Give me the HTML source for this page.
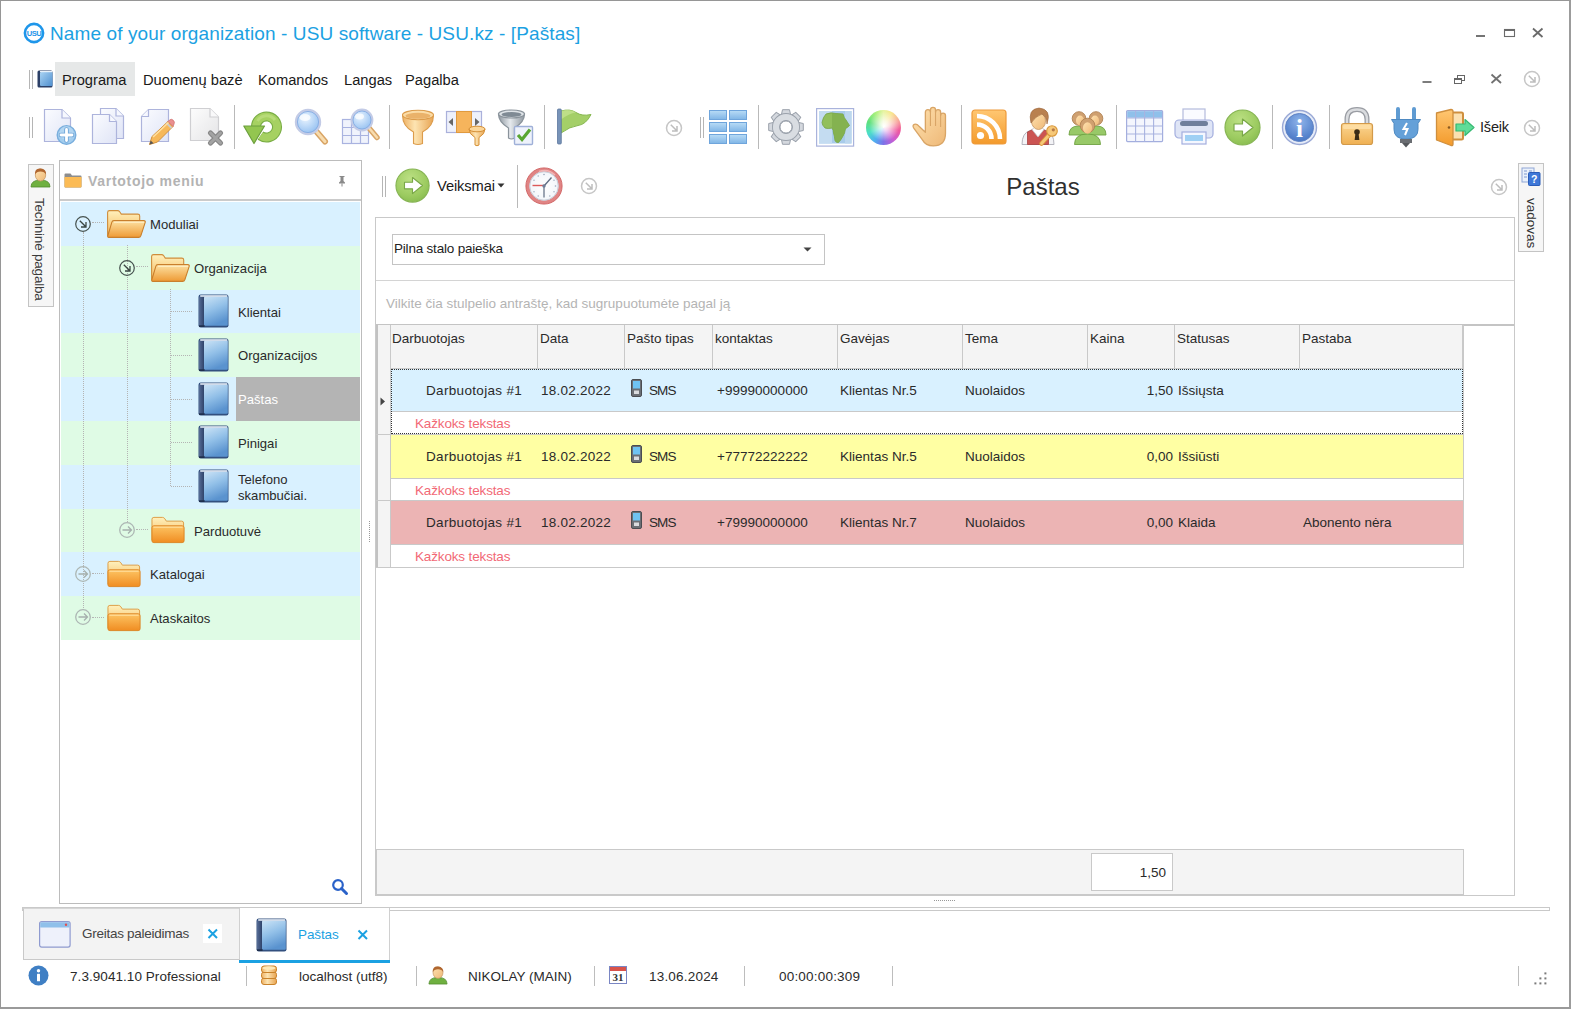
<!DOCTYPE html>
<html lang="lt">
<head>
<meta charset="utf-8">
<title>Name of your organization - USU software - USU.kz - [Paštas]</title>
<style>
*{box-sizing:border-box;margin:0;padding:0}
html,body{width:1571px;height:1009px;overflow:hidden;background:#fff}
body{font-family:"Liberation Sans",sans-serif;font-size:13.5px;color:#2a2a2a;position:relative}
.a{position:absolute}
.t{position:absolute;white-space:nowrap;line-height:16px;height:16px}
.win{position:absolute;left:0;top:0;width:1571px;height:1009px;border:1px solid #969696;border-right:2px solid #9c9c9c;border-bottom:2px solid #9a9a9a}
.title{left:50px;top:22px;font-size:19px;line-height:24px;height:24px;color:#1ba1e2;letter-spacing:.11px}
.menu{font-size:14.7px;line-height:18px;height:18px;top:71px;color:#1a1a1a}
.sep{position:absolute;width:1px;background:#b9b9b9}
.grip{position:absolute;width:4px;border-left:1px solid #b5b5b5;border-right:1px solid #b5b5b5}
.ic{position:absolute;overflow:visible}
.row{position:absolute;left:61px;width:299px;height:43.8px}
.rb{background:#d9f1ff}
.rg{background:#dffbe5}
.tl{position:absolute;font-size:13.1px;line-height:15px;color:#2a2a2a;white-space:nowrap}
.hd{position:absolute;top:325px;height:44px;background:#f4f4f4;border-right:1px solid #c9c9c9;border-bottom:1px solid #c9c9c9;font-size:13.5px;padding:6px 0 0 2px;white-space:nowrap}
.c{position:absolute;white-space:nowrap;font-size:13.5px;line-height:16px}
.pv{position:absolute;left:415px;letter-spacing:-.15px;color:#f26976;font-size:13.5px;line-height:16px;white-space:nowrap}
.st{position:absolute;top:969px;font-size:13.5px;line-height:16px;white-space:nowrap;color:#2a2a2a}
.ssep{position:absolute;top:966px;height:20px;width:1px;background:#bdbdbd}
</style>
</head>
<body>
<div class="win"></div>

<!-- TITLE BAR -->
<svg class="ic" style="left:23px;top:22px" width="22" height="22" viewBox="0 0 22 22"><circle cx="11" cy="11" r="9.100" fill="#fff" stroke="#1e96ea" stroke-width="2.600"/><text x="11" y="13.700" font-family="Liberation Sans, sans-serif" font-size="7.600" font-weight="700" fill="#1e96ea" text-anchor="middle" letter-spacing="-0.500">USU</text></svg>
<div class="t title">Name of your organization - USU software - USU.kz - [Paštas]</div>
<!-- window buttons -->
<svg class="ic" style="left:1470px;top:24px" width="80" height="20" viewBox="0 0 80 20"><rect x="6" y="11" width="9" height="2" fill="#747474"/><rect x="34.500" y="5.500" width="10" height="7" fill="none" stroke="#6a6a6a" stroke-width="1.100"/><rect x="34" y="5" width="11" height="2" fill="#6a6a6a"/><path d="M63 4.500l9.500 8.500M72.500 4.500l-9.500 8.500" stroke="#6a6a6a" stroke-width="1.800" fill="none"/></svg>

<!-- MENU BAR -->
<div class="grip" style="left:29px;top:70px;height:19px"></div>
<svg class="ic" style="left:37px;top:70px" width="16" height="18" viewBox="0 0 16 18"><defs><linearGradient id="bk" x1="0" y1="0" x2="1" y2="1"><stop offset="0" stop-color="#a9d3f3"/><stop offset="1" stop-color="#4f8fcf"/></linearGradient></defs><rect x=".5" y=".5" width="15" height="17" rx="1.5" fill="#2b3f66"/><rect x="3" y="2" width="12.500" height="14" rx="1" fill="url(#bk)"/><rect x="3" y="1" width="12.5" height="1.200" fill="#e8f1fa"/></svg>
<div class="a" style="left:55px;top:62px;width:80px;height:34px;background:#e6e8e8"></div>
<div class="t menu" style="left:62px">Programa</div>
<div class="t menu" style="left:143px">Duomenų bazė</div>
<div class="t menu" style="left:258px">Komandos</div>
<div class="t menu" style="left:344px">Langas</div>
<div class="t menu" style="left:405px">Pagalba</div>
<!-- mdi buttons -->
<svg class="ic" style="left:1415px;top:68px" width="130" height="24" viewBox="0 0 130 24"><rect x="7.500" y="13" width="9" height="2" fill="#7c7c7c"/><rect x="42.500" y="7.500" width="7" height="5" fill="#fff" stroke="#666"/><rect x="39.500" y="10.500" width="7" height="5" fill="#fff" stroke="#666"/><rect x="39" y="10" width="8" height="2" fill="#666"/><path d="M76.500 6.500l9.500 8.500M86 6.500l-9.500 8.500" stroke="#707070" stroke-width="1.800"/><g id="exg"><circle cx="117" cy="11" r="7.500" fill="#fff" stroke="#c6c6c6" stroke-width="1.500"/><path d="M113.800 7.800l5.500 5.500M120 9v5h-5" stroke="#bdbdbd" stroke-width="1.500" fill="none"/></g></svg>

<!-- TOOLBAR 1 -->
<svg width="0" height="0" style="position:absolute"><defs>
<linearGradient id="pg" x1="0" y1="0" x2="1" y2="1"><stop offset="0" stop-color="#fbfcff"/><stop offset="1" stop-color="#dfe4f6"/></linearGradient>
<linearGradient id="pgg" x1="0" y1="0" x2="1" y2="1"><stop offset="0" stop-color="#fdfdfd"/><stop offset="1" stop-color="#e4e4e6"/></linearGradient>
<radialGradient id="gg" cx=".42" cy=".3" r=".85"><stop offset="0" stop-color="#bce084"/><stop offset=".6" stop-color="#9ccb60"/><stop offset="1" stop-color="#7fb548"/></radialGradient>
<radialGradient id="lens" cx=".4" cy=".35" r=".7"><stop offset="0" stop-color="#e9f4ff"/><stop offset="1" stop-color="#8fbdf0"/></radialGradient>
<linearGradient id="gold" x1="0" y1="0" x2="1" y2="0"><stop offset="0" stop-color="#eeb062"/><stop offset=".4" stop-color="#fde4b2"/><stop offset="1" stop-color="#e8a452"/></linearGradient>
<linearGradient id="silv" x1="0" y1="0" x2="1" y2="0"><stop offset="0" stop-color="#8e979f"/><stop offset=".45" stop-color="#e6eaee"/><stop offset="1" stop-color="#8e979f"/></linearGradient>
<linearGradient id="blu" x1="0" y1="0" x2="0" y2="1"><stop offset="0" stop-color="#b9dcf6"/><stop offset="1" stop-color="#7fb5e6"/></linearGradient>
<linearGradient id="org" x1="0" y1="0" x2="0" y2="1"><stop offset="0" stop-color="#ffc772"/><stop offset="1" stop-color="#f39a2b"/></linearGradient>
<linearGradient id="fold" x1="0" y1="0" x2="0" y2="1"><stop offset="0" stop-color="#fff0bc"/><stop offset="1" stop-color="#f5b85a"/></linearGradient>
<linearGradient id="fold2" x1="0" y1="0" x2="0" y2="1"><stop offset="0" stop-color="#fde2a4"/><stop offset="1" stop-color="#ee9a34"/></linearGradient>
<linearGradient id="book" x1="0" y1="0" x2=".35" y2="1"><stop offset="0" stop-color="#cbe3f6"/><stop offset=".5" stop-color="#92c0e8"/><stop offset="1" stop-color="#5a93cf"/></linearGradient><linearGradient id="spine" x1="0" y1="0" x2="1" y2="0"><stop offset="0" stop-color="#566c96"/><stop offset="1" stop-color="#2b3f66"/></linearGradient>
<radialGradient id="info" cx=".5" cy=".3" r=".8"><stop offset="0" stop-color="#8fb4ea"/><stop offset="1" stop-color="#3f6fc0"/></radialGradient>
<linearGradient id="fold3" x1="0" y1="0" x2="0" y2="1"><stop offset="0" stop-color="#fdc463"/><stop offset="1" stop-color="#f08d22"/></linearGradient><linearGradient id="lockg" x1="0" y1="0" x2="0" y2="1"><stop offset="0" stop-color="#fbd693"/><stop offset="1" stop-color="#efb052"/></linearGradient><linearGradient id="skin" x1="0" y1="0" x2="1" y2="1"><stop offset="0" stop-color="#ffe2b0"/><stop offset="1" stop-color="#eeb877"/></linearGradient>
</defs></svg>
<div class="grip" style="left:29px;top:117px;height:21px"></div>
<!-- new -->
<svg class="ic" style="left:43px;top:108px" width="36" height="38" viewBox="0 0 36 38"><path d="M1.500 1.500H19L27.500 10V33.500H1.500Z" fill="url(#pg)" stroke="#adb4dc" stroke-width="1.200"/><path d="M19 1.500V10H27.500" fill="#f6f8fe" stroke="#adb4dc" stroke-width="1.200"/><circle cx="23.500" cy="27" r="9.300" fill="#a3cdee" stroke="#79aedd" stroke-width="1.400"/><circle cx="23.500" cy="25" r="7" fill="#b9daf3" opacity=".7"/><path d="M23.500 21.500v11M18 27h11" stroke="#6fa5d8" stroke-width="4.600" stroke-linecap="round"/><path d="M23.500 21.500v11M18 27h11" stroke="#fff" stroke-width="2.800" stroke-linecap="round"/></svg>
<!-- copy -->
<svg class="ic" style="left:91px;top:107px" width="36" height="38" viewBox="0 0 36 38"><path d="M9.500 1.500H25L32.500 9V31.500H9.500Z" fill="url(#pg)" stroke="#adb4dc" stroke-width="1.200"/><path d="M25 1.500V9H32.500" fill="#f6f8fe" stroke="#adb4dc" stroke-width="1.200"/><path d="M1.500 7.500H18.500L25.500 14.500V36.500H1.500Z" fill="url(#pg)" stroke="#adb4dc" stroke-width="1.200"/><path d="M18.500 7.500V14.500H25.500" fill="#f6f8fe" stroke="#adb4dc" stroke-width="1.200"/></svg>
<!-- edit -->
<svg class="ic" style="left:140px;top:108px" width="38" height="40" viewBox="0 0 38 40"><path d="M8.500 1.500H28.500V33.500H1.500V8.500Z" fill="url(#pg)" stroke="#adb4dc" stroke-width="1.200"/><path d="M8.500 1.500V8.500H1.500" fill="#f6f8fe" stroke="#adb4dc" stroke-width="1.200"/><path d="M9.500 36.500l2.500-8L28 13.500l5 5L17.500 34Z" fill="#f6b85a" stroke="#d3913c" stroke-width="1"/><path d="M28 13.500l1.500-1.500q2-1.500 3.800.3t.7 3.700L33 18.500Z" fill="#ea8f8f" stroke="#cf7070" stroke-width=".8"/><path d="M26.500 15.200l5 5" stroke="#c8ccd4" stroke-width="1.800"/><path d="M9.500 36.500l1.200-4 2.800 2.800Z" fill="#555"/><path d="M13 29L28.500 14.500" stroke="#ffe0a0" stroke-width="1.600"/></svg>
<!-- delete -->
<svg class="ic" style="left:189px;top:107px" width="38" height="40" viewBox="0 0 38 40"><path d="M1.500 1.500H21L29.500 10V33.500H1.500Z" fill="url(#pgg)" stroke="#cfcfd2" stroke-width="1.200"/><path d="M21 1.500V10H29.500" fill="#f9f9fa" stroke="#cfcfd2" stroke-width="1.200"/><path d="M21.500 26l10 10M31.500 26l-10 10" stroke="#858585" stroke-width="5.200" stroke-linecap="round"/><path d="M21.500 26l10 10M31.500 26l-10 10" stroke="#a3a3a3" stroke-width="3" stroke-linecap="round"/></svg>
<div class="sep" style="left:234px;top:105px;height:44px"></div>
<!-- refresh -->
<svg class="ic" style="left:243px;top:109px" width="40" height="38" viewBox="0 0 40 38"><path d="M13 18A10.500 10.500 0 1 1 17.500 26.600" fill="none" stroke="#79ad45" stroke-width="10"/><path d="M13 18A10.500 10.500 0 1 1 17.500 26.600" fill="none" stroke="#a6d162" stroke-width="7.800"/><path d="M14.500 12A10.500 10.500 0 0 1 32 11" fill="none" stroke="#bfe082" stroke-width="3" opacity=".7"/><path d="M.8 17H21.500L11 34.500Z" fill="#93c650" stroke="#6c9f3e" stroke-width="1.200" stroke-linejoin="round"/></svg>
<!-- search -->
<svg class="ic" style="left:294px;top:108px" width="38" height="38" viewBox="0 0 38 38"><path d="M22 23l9 10.500" stroke="#d9a566" stroke-width="6" stroke-linecap="round"/><path d="M22 23l9 10.500" stroke="#f8dcae" stroke-width="3" stroke-linecap="round"/><circle cx="14" cy="14" r="12" fill="url(#lens)" stroke="#c3cbe6" stroke-width="2.400"/><circle cx="14" cy="14" r="10.600" fill="none" stroke="#86abe2" stroke-width=".9"/><ellipse cx="11" cy="9.500" rx="5.500" ry="3.600" fill="#fff" opacity=".75"/></svg>
<!-- search table -->
<svg class="ic" style="left:341px;top:108px" width="40" height="38" viewBox="0 0 40 38"><rect x="1.500" y="11.500" width="26" height="24" fill="#f0f3fc" stroke="#a9b3e0" stroke-width="1.200"/><path d="M1.500 19.500h26M1.500 27.500h26M10.500 11.500v24M19.500 11.500v24" stroke="#a9b3e0" stroke-width="1.200"/><path d="M28 20l8 9.500" stroke="#d9a566" stroke-width="5.500" stroke-linecap="round"/><path d="M28 20l8 9.500" stroke="#f8dcae" stroke-width="2.600" stroke-linecap="round"/><circle cx="21" cy="12" r="10.300" fill="url(#lens)" stroke="#c3cbe6" stroke-width="2.200"/><circle cx="21" cy="12" r="9" fill="none" stroke="#86abe2" stroke-width=".9"/><ellipse cx="18.500" cy="8.500" rx="4.500" ry="3" fill="#fff" opacity=".75"/></svg>
<div class="sep" style="left:389px;top:105px;height:44px"></div>
<!-- funnel gold -->
<svg class="ic" style="left:401px;top:109px" width="34" height="38" viewBox="0 0 34 38"><path d="M1.500 6Q1.500 17.500 12.500 23V34.500q4.500 2 9 0V23Q32.500 17.500 32.500 6Z" fill="url(#gold)" stroke="#dc9c4c" stroke-width="1.100"/><ellipse cx="17" cy="6" rx="15.500" ry="4.800" fill="#fbdca6" stroke="#dc9c4c" stroke-width="1.100"/><ellipse cx="17" cy="6.800" rx="12.500" ry="3" fill="#eab26a"/></svg>
<!-- filter columns -->
<svg class="ic" style="left:445px;top:110px" width="44" height="38" viewBox="0 0 44 38"><rect x="1.500" y="1.500" width="35" height="21" fill="#eef1fb" stroke="#aab1db" stroke-width="1.200"/><rect x="11.500" y="1.500" width="15" height="21" fill="#f6b45c" stroke="#e09a3e" stroke-width="1"/><path d="M8 8v8l-4.500-4ZM30 8v8l4.500-4Z" fill="#666"/><path d="M24 19q0 5 6 8.500V35q2 1.500 4 0V27.500Q40 24 40 19Z" fill="url(#gold)" stroke="#d58f35" stroke-width="1"/><ellipse cx="32" cy="19" rx="8" ry="2.800" fill="#fbd69a" stroke="#d58f35" stroke-width="1"/></svg>
<!-- funnel check -->
<svg class="ic" style="left:497px;top:109px" width="40" height="38" viewBox="0 0 40 38"><path d="M1.500 5q0 8 10 14V29q3 2 6 0V19Q27.500 13 27.500 5Z" fill="url(#silv)" stroke="#8a939b" stroke-width="1.200"/><ellipse cx="14.500" cy="5" rx="13" ry="4" fill="#dfe4e8" stroke="#8a939b" stroke-width="1.200"/><ellipse cx="14.500" cy="5.500" rx="10" ry="2.500" fill="#7f8a94"/><rect x="17.500" y="17.500" width="18" height="18" rx="1" fill="#eef2fb" stroke="#9fb0d8" stroke-width="1.400"/><path d="M21 26l4 4.500 8-10" stroke="#58a632" stroke-width="3.200" fill="none"/></svg>
<div class="sep" style="left:544px;top:105px;height:44px"></div>
<!-- flag -->
<svg class="ic" style="left:555px;top:108px" width="40" height="38" viewBox="0 0 40 38"><path d="M6 3q9-2.500 15 1.500t15 2q-5 10-13 11t-17 7.500Z" fill="#a4cf68" stroke="#86b750" stroke-width="1"/><path d="M6 3q9-2.500 15 1.500-7 1-15 7Z" fill="#c4e290" opacity=".8"/><rect x="2.500" y="1" width="3.800" height="35" rx="1" fill="#7893b8" stroke="#5d779e" stroke-width=".8"/></svg>
<svg class="ic" style="left:665px;top:119px" width="18" height="18" viewBox="108 2 18 18"><use href="#exg"/></svg>
<div class="grip" style="left:700px;top:117px;height:21px"></div>
<!-- grid -->
<svg class="ic" style="left:709px;top:110px" width="38" height="34" viewBox="0 0 38 34"><g fill="url(#blu)" stroke="#6fa5dc" stroke-width="1"><rect x=".5" y=".5" width="17" height="9"/><rect x="20.500" y=".5" width="17" height="9"/><rect x=".5" y="12.500" width="17" height="9"/><rect x="20.500" y="12.500" width="17" height="9"/><rect x=".5" y="24.500" width="17" height="9"/><rect x="20.500" y="24.500" width="17" height="9"/></g></svg>
<div class="sep" style="left:758px;top:105px;height:44px"></div>
<!-- gear -->
<svg class="ic" style="left:768px;top:109px" width="36" height="36" viewBox="-18 -18 36 36"><g fill="#d4d8de" stroke="#9aa1ab" stroke-width="1"><path id="gt" d="M-3.500-17.300h7l1.200 5.500h-9.400Z"/><use href="#gt" transform="rotate(45)"/><use href="#gt" transform="rotate(90)"/><use href="#gt" transform="rotate(135)"/><use href="#gt" transform="rotate(180)"/><use href="#gt" transform="rotate(225)"/><use href="#gt" transform="rotate(270)"/><use href="#gt" transform="rotate(315)"/></g><circle r="10" fill="none" stroke="#9aa1ab" stroke-width="8"/><circle r="10" fill="none" stroke="#d9dde2" stroke-width="6.200"/><circle r="6" fill="#fff" stroke="#9aa1ab" stroke-width="1"/></svg>
<!-- map -->
<svg class="ic" style="left:816px;top:108px" width="39" height="39" viewBox="0 0 39 39"><rect x=".600" y=".600" width="37" height="37.500" fill="#fff" stroke="#a9b3dc" stroke-width="1.200"/><rect x="3" y="3" width="32.500" height="32.500" fill="#a8cbea"/><rect x="3" y="3" width="13" height="32.500" fill="#c4dcf1"/><rect x="29" y="3" width="6.500" height="32.500" fill="#bcd7ee"/><path d="M10 6Q15 4 20 5.500L27 6Q28 10 30 12L33.500 17.500Q31 20 29.500 20.500Q29 25 27 28Q25 32 22.500 34.500Q20 35 19 32.500Q18.500 28 17.500 25Q17.500 22 16 20Q12 21 9 20Q6 17 6 14.500Q7 9 10 6Z" fill="#92bf5c" stroke="#76a347" stroke-width=".8"/><path d="M16 5.200L27 6Q28 10 30 12L33.500 17.500Q31 20 29.500 20.500Q29 25 27 28Q25 32 22.500 34.500Q20 35 19 32.500Q18.500 28 17.500 25Q17.500 22 16 20Z" fill="#7fae4c" opacity=".75"/></svg>
<!-- color wheel -->
<div class="a" style="left:866px;top:110px;width:35px;height:35px;border-radius:50%;background:radial-gradient(circle at 52% 46%,#fff 0,rgba(255,255,255,.75) 18%,rgba(255,255,255,0) 58%),conic-gradient(from 0deg,#e6f4a0,#f8e68c 30deg,#f8a39c 68deg,#f0589c 100deg,#cc5cd2 140deg,#7c72e8 180deg,#4eb0f0 215deg,#4ce0c6 250deg,#5ee07c 290deg,#a8f07c 330deg,#e6f4a0)"></div>
<!-- hand -->
<svg class="ic" style="left:911px;top:106px" width="42" height="42" viewBox="0 0 38 40" preserveAspectRatio="none"><path d="M13 20V6q0-2.500 2.300-2.500T17.600 6V3.800q0-2.500 2.300-2.500t2.300 2.500V6q0-2.500 2.300-2.500T26.800 6V9q0-2.300 2.200-2.300T31.200 9V26q0 12-11 12-7 0-10-6L2.500 21q-1.500-2.500.5-3.500t4 1.500l6 6Z" fill="url(#skin)" stroke="#d9a566" stroke-width="1.200" stroke-linejoin="round"/><path d="M17.600 6V19M22.200 6V19M26.800 9V20" stroke="#d9a566" stroke-width="1"/></svg>
<div class="sep" style="left:961px;top:105px;height:44px"></div>
<!-- rss -->
<svg class="ic" style="left:971px;top:109px" width="36" height="36" viewBox="0 0 36 36"><rect x="1" y="1" width="34" height="34" rx="3" fill="url(#org)" stroke="#ee9a3a" stroke-width="1.200"/><circle cx="9.500" cy="26.500" r="3.600" fill="#fff"/><path d="M6 15.500A14.500 14.500 0 0 1 20.500 30M6 7A23 23 0 0 1 29 30" fill="none" stroke="#fff" stroke-width="4.600"/></svg>
<!-- user key -->
<svg class="ic" style="left:1020px;top:106px" width="40" height="40" viewBox="0 0 40 40"><path d="M2 38.500Q2 27 10 24.500L18 22 26 24.500Q34 27 34 38.500Z" fill="#f3f3f6" stroke="#b4b4bc" stroke-width="1"/><path d="M7.500 38.500V26L13 23.500 18 31 23 23.500 28.500 26V38.500Z" fill="#cb5452" stroke="#a94040" stroke-width=".8"/><path d="M12 23.500L18 31 24 23.500 21 21H15Z" fill="#fff" stroke="#c4c4c8" stroke-width=".8"/><ellipse cx="18.500" cy="15" rx="7" ry="8.500" fill="url(#skin)" stroke="#c99a66" stroke-width=".9"/><path d="M11 17Q7.500 3 19 2Q32 3 27 18Q26.500 10.500 22 8Q15.500 10 11 17Z" fill="#b9804f" stroke="#9a643a" stroke-width=".6"/><path d="M29.500 28.500L21.500 37.500" stroke="#d9973a" stroke-width="4.600" stroke-linecap="round"/><path d="M29.500 28.500L21.500 37.500" stroke="#f6c878" stroke-width="2.800" stroke-linecap="round"/><circle cx="32" cy="25" r="5.300" fill="#f6c878" stroke="#d9973a" stroke-width="1.100"/><circle cx="33.300" cy="23.800" r="1.600" fill="#b67a48"/></svg>
<!-- users -->
<svg class="ic" style="left:1068px;top:107px" width="40" height="40" viewBox="0 0 40 40"><g stroke-width=".9"><path d="M1 28Q1 19 10.500 19T20 28Z" fill="#98c968" stroke="#6fa243"/><path d="M19 28Q19 19 28.500 19T38 28Z" fill="#98c968" stroke="#6fa243"/><circle cx="11" cy="11.500" r="6.800" fill="#cfa070" stroke="#b08050"/><ellipse cx="12" cy="13.500" rx="4" ry="5" fill="url(#skin)"/><circle cx="28" cy="11.500" r="6.800" fill="#cfa070" stroke="#b08050"/><ellipse cx="27" cy="13.500" rx="4" ry="5" fill="url(#skin)"/><path d="M6.500 37.500Q6.500 27 19.500 27T32.500 37.500Z" fill="#98c968" stroke="#6fa243"/><circle cx="19.500" cy="18.500" r="7.300" fill="#cfa070" stroke="#b08050"/><ellipse cx="19.500" cy="21" rx="4.600" ry="5.800" fill="url(#skin)"/></g></svg>
<div class="sep" style="left:1116px;top:105px;height:44px"></div>
<!-- table -->
<svg class="ic" style="left:1126px;top:110px" width="38" height="34" viewBox="0 0 38 34"><rect x=".600" y=".600" width="36" height="31" rx="1" fill="#f4f6fd" stroke="#a3aede" stroke-width="1.200"/><rect x="1.200" y="1.200" width="34.800" height="6.500" fill="#8fc0ea"/><path d="M.600 8h36M.600 16h36M.600 24h36M9.600 1v30.500M18.600 1v30.500M27.600 1v30.500" stroke="#a9b3e0" stroke-width="1.100"/></svg>
<!-- printer -->
<svg class="ic" style="left:1174px;top:108px" width="40" height="38" viewBox="0 0 40 38"><rect x="9" y="1" width="22" height="13" fill="#fafbff" stroke="#b4bbdc" stroke-width="1.200"/><rect x="1" y="12" width="38" height="18" rx="4" fill="#dfe5f6" stroke="#a3aede" stroke-width="1.200"/><rect x="6" y="13" width="28" height="5" rx="2.500" fill="#6f7f9c"/><rect x="8" y="24" width="24" height="12" fill="#f4f7ff" stroke="#a3aede" stroke-width="1.200"/><rect x="11" y="27" width="18" height="6" fill="#9fd0f4"/></svg>
<!-- go -->
<svg class="ic" style="left:1224px;top:109px" width="38" height="38" viewBox="0 0 38 38"><circle cx="18.500" cy="18.500" r="17.500" fill="url(#gg)" stroke="#86b453" stroke-width="1.200"/><path d="M10 15h8.500V10l10.500 8.500L18.500 27V22H10Z" fill="#fff" stroke="#7aa848" stroke-width="1.200" stroke-linejoin="round"/></svg>
<div class="sep" style="left:1272px;top:105px;height:44px"></div>
<!-- info -->
<svg class="ic" style="left:1281px;top:109px" width="38" height="38" viewBox="0 0 38 38"><circle cx="18.500" cy="18.500" r="17" fill="#e6ecf8" stroke="#9aa9d6" stroke-width="1.400"/><circle cx="18.500" cy="18.500" r="14" fill="url(#info)" stroke="#5f82c4" stroke-width="1"/><text x="18.500" y="27.500" font-family="Liberation Serif, serif" font-size="25" font-weight="700" fill="#fff" text-anchor="middle">i</text></svg>
<div class="sep" style="left:1329px;top:105px;height:44px"></div>
<!-- lock -->
<svg class="ic" style="left:1340px;top:107px" width="34" height="40" viewBox="0 0 34 40"><path d="M7 19V12.500Q7 2.500 17 2.500T27 12.500V19" fill="none" stroke="#9a9da3" stroke-width="5"/><path d="M7 19V12.500Q7 2.500 17 2.500T27 12.500V19" fill="none" stroke="#dadcdf" stroke-width="2.400"/><rect x="1.500" y="16.500" width="31" height="21" rx="2.500" fill="url(#lockg)" stroke="#d39a4a" stroke-width="1.200"/><rect x="3" y="18" width="28" height="4" rx="1.500" fill="#ffe0a8" opacity=".8"/><circle cx="17" cy="25" r="2.800" fill="#3a2b16"/><path d="M15.600 25h2.800l1 8h-4.800Z" fill="#3a2b16"/></svg>
<!-- plug -->
<svg class="ic" style="left:1390px;top:107px" width="32" height="42" viewBox="0 0 32 42"><path d="M8 2v12M24 2v12" stroke="#5f9bd2" stroke-width="4" stroke-linecap="round"/><path d="M1.500 12.500h29l-2.500 4v6q0 9.500-12 9.500t-12-9.500v-6Z" fill="#64a0d8" stroke="#4f8ac2" stroke-width="1"/><path d="M17 16l-3.500 6h4l-2.500 6" stroke="#fff" stroke-width="2" fill="none"/><rect x="10" y="32" width="12" height="4" fill="#6a6d72"/><path d="M12 36h8l-4 4.500Z" fill="#55585c"/></svg>
<!-- door -->
<svg class="ic" style="left:1435px;top:108px" width="42" height="40" viewBox="0 0 42 40"><rect x="14" y="4.500" width="14" height="27" rx="1.500" fill="#fbe0b0" stroke="#cf8f3e" stroke-width="2"/><path d="M1.500 5L16 1.500q2 0 2 2V36q0 2-2 1.500L1.500 32Z" fill="url(#org)" stroke="#cf8f3e" stroke-width="1.300" stroke-linejoin="round"/><circle cx="14" cy="19.500" r="1.300" fill="#8a5a20"/><path d="M21 16h9V11.500L39 19.500 30 27.500V23h-9Z" fill="#5fdc98" stroke="#35b872" stroke-width="1.200" stroke-linejoin="round"/></svg>
<div class="t" style="left:1480px;top:119px;font-size:14.500px;letter-spacing:-.2px;color:#222">Išeik</div>
<svg class="ic" style="left:1523px;top:119px" width="18" height="18" viewBox="108 2 18 18"><use href="#exg"/></svg>

<!--LP0-->
<!-- LEFT SIDE TAB -->
<div class="a" style="left:28px;top:164px;width:26px;height:143px;border:1px solid #c4c4c4;background:#f6f6f6"></div>
<svg class="ic" style="left:30px;top:167px" width="21" height="21" viewBox="0 0 21 21"><path d="M1 20q0-7 9.500-7T20 20Z" fill="#6fb040" stroke="#4f8a2c" stroke-width=".8"/><ellipse cx="10.500" cy="8" rx="5.200" ry="6" fill="url(#skin)" stroke="#c99a66" stroke-width=".8"/><path d="M5 7.500Q4.500 1 10.500 1.500T16 7.500Q14.500 4.500 10.500 4.500T5 7.500Z" fill="#b0662f"/></svg>
<div class="t" style="left:-13.500px;top:242px;width:104px;text-align:left;transform:rotate(90deg);transform-origin:center;font-size:13.5px;letter-spacing:-.2px;color:#3a3a3a">Techninė pagalba</div>
<!-- LEFT PANEL -->
<div class="a" style="left:59px;top:160px;width:303px;height:744px;border:1px solid #bcbcbc;background:#fff"></div>
<div class="a" style="left:60px;top:199px;width:301px;height:2px;background:#cbcbcb"></div>
<svg class="ic" style="left:64px;top:173px" width="18" height="15" viewBox="0 0 18 15"><path d="M.5 1.500q0-1 1-1h5l1.500 2h8.500q1 0 1 1V13.500q0 1-1 1H1.500q-1 0-1-1Z" fill="#8d8d8d"/><path d="M.5 4h17V13.500q0 1-1 1H1.500q-1 0-1-1Z" fill="#fbbb55"/></svg>
<div class="t" style="left:88px;top:173px;font-weight:700;font-size:14px;color:#b3b3b3;letter-spacing:.7px">Vartotojo meniu</div>
<svg class="ic" style="left:336px;top:175px" width="12" height="12" viewBox="0 0 12 12"><path d="M3.500 1h5v1h-1v4l1.500 1.500v1h-6v-1L4.500 6V2h-1Z" fill="#8a8a8a"/><path d="M6 8.500v3" stroke="#8a8a8a" stroke-width="1"/></svg>
<div class="row rb" style="top:202.0px"></div>
<div class="row rg" style="top:245.8px"></div>
<div class="row rb" style="top:289.6px"></div>
<div class="row rg" style="top:333.4px"></div>
<div class="row rb" style="top:377.2px"></div>
<div class="row rg" style="top:421.0px"></div>
<div class="row rb" style="top:464.8px"></div>
<div class="row rg" style="top:508.6px"></div>
<div class="row rb" style="top:552.4px"></div>
<div class="row rg" style="top:596.2px"></div>
<div class="a" style="left:83px;top:232.4px;height:377.2px;width:0;border-left:1px dotted #b4b4b4"></div>
<div class="a" style="left:127px;top:245.4px;height:276.6px;width:0;border-left:1px dotted #b4b4b4"></div>
<div class="a" style="left:170px;top:289.2px;height:197.0px;width:0;border-left:1px dotted #b4b4b4"></div>
<div class="a" style="left:171px;top:311.0px;width:21px;height:0;border-top:1px dotted #b4b4b4"></div>
<div class="a" style="left:171px;top:354.8px;width:21px;height:0;border-top:1px dotted #b4b4b4"></div>
<div class="a" style="left:171px;top:398.6px;width:21px;height:0;border-top:1px dotted #b4b4b4"></div>
<div class="a" style="left:171px;top:442.4px;width:21px;height:0;border-top:1px dotted #b4b4b4"></div>
<div class="a" style="left:171px;top:486.2px;width:21px;height:0;border-top:1px dotted #b4b4b4"></div>
<div class="a" style="left:92px;top:222.4px;width:12px;height:0;border-top:1px dotted #b4b4b4"></div>
<div class="a" style="left:92px;top:572.8px;width:12px;height:0;border-top:1px dotted #b4b4b4"></div>
<div class="a" style="left:92px;top:616.6px;width:12px;height:0;border-top:1px dotted #b4b4b4"></div>
<div class="a" style="left:136px;top:266.2px;width:12px;height:0;border-top:1px dotted #b4b4b4"></div>
<div class="a" style="left:136px;top:529.0px;width:12px;height:0;border-top:1px dotted #b4b4b4"></div>
<svg class="ic" style="left:74px;top:215.4px" width="18" height="18" viewBox="0 0 18 18"><circle cx="9" cy="9" r="7.300" fill="none" stroke="#46524f" stroke-width="1.200"/><path d="M5.800 5.800l5.500 5.500M12 7v5H7" stroke="#3a4643" stroke-width="1.300" fill="none"/></svg>
<svg class="ic" style="left:107px;top:209.9px" width="39" height="28" viewBox="0 0 39 28"><path d="M.6 26V2.500q0-1.900 1.900-1.900h8q1.400 0 2.200 1.200l1.600 2.300h16.500q1.900 0 1.900 1.900V12H6Z" fill="url(#fold)" stroke="#cf8d3c" stroke-width="1.100"/><path d="M6.800 10.600h30q1.900 0 1.400 1.800l-4.300 13.200q-.6 1.800-2.400 1.800H1.900q-1.600 0-1.100-1.600l4-13.400q.5-1.800 2-1.800Z" fill="url(#fold2)" stroke="#c97f2c" stroke-width="1.100"/><path d="M7 12.200h30" stroke="#fff0c8" stroke-width="1.200"/></svg>
<div class="tl" style="left:150px;top:216.9px">Moduliai</div>
<svg class="ic" style="left:118px;top:259.2px" width="18" height="18" viewBox="0 0 18 18"><circle cx="9" cy="9" r="7.300" fill="none" stroke="#46524f" stroke-width="1.200"/><path d="M5.800 5.800l5.500 5.500M12 7v5H7" stroke="#3a4643" stroke-width="1.300" fill="none"/></svg>
<svg class="ic" style="left:151px;top:253.7px" width="39" height="28" viewBox="0 0 39 28"><path d="M.6 26V2.500q0-1.900 1.900-1.900h8q1.400 0 2.200 1.200l1.600 2.300h16.500q1.900 0 1.900 1.900V12H6Z" fill="url(#fold)" stroke="#cf8d3c" stroke-width="1.100"/><path d="M6.800 10.600h30q1.900 0 1.400 1.800l-4.300 13.200q-.6 1.800-2.400 1.800H1.900q-1.600 0-1.100-1.600l4-13.400q.5-1.800 2-1.800Z" fill="url(#fold2)" stroke="#c97f2c" stroke-width="1.100"/><path d="M7 12.200h30" stroke="#fff0c8" stroke-width="1.200"/></svg>
<div class="tl" style="left:194px;top:260.7px">Organizacija</div>
<svg class="ic" style="left:197.7px;top:294.0px" width="31" height="34" viewBox="0 0 31 34"><rect x=".5" y=".5" width="30" height="33" rx="2.200" fill="#33507f"/><rect x="1" y="2.500" width="5.500" height="30" rx="1" fill="url(#spine)"/><rect x="6" y="2.600" width="23.800" height="29.200" rx="1" fill="url(#book)"/><rect x="2" y="1.200" width="27.500" height="1.500" rx=".7" fill="#eef4fb"/><rect x="1" y="31.300" width="5.500" height="1.700" fill="#1f2f4e"/></svg>
<div class="tl" style="left:238px;top:304.5px">Klientai</div>
<svg class="ic" style="left:197.7px;top:337.8px" width="31" height="34" viewBox="0 0 31 34"><rect x=".5" y=".5" width="30" height="33" rx="2.200" fill="#33507f"/><rect x="1" y="2.500" width="5.500" height="30" rx="1" fill="url(#spine)"/><rect x="6" y="2.600" width="23.800" height="29.200" rx="1" fill="url(#book)"/><rect x="2" y="1.200" width="27.500" height="1.500" rx=".7" fill="#eef4fb"/><rect x="1" y="31.300" width="5.500" height="1.700" fill="#1f2f4e"/></svg>
<div class="tl" style="left:238px;top:348.3px">Organizacijos</div>
<svg class="ic" style="left:197.7px;top:381.6px" width="31" height="34" viewBox="0 0 31 34"><rect x=".5" y=".5" width="30" height="33" rx="2.200" fill="#33507f"/><rect x="1" y="2.500" width="5.500" height="30" rx="1" fill="url(#spine)"/><rect x="6" y="2.600" width="23.800" height="29.200" rx="1" fill="url(#book)"/><rect x="2" y="1.200" width="27.500" height="1.500" rx=".7" fill="#eef4fb"/><rect x="1" y="31.300" width="5.500" height="1.700" fill="#1f2f4e"/></svg>
<div class="a" style="left:236px;top:377.2px;width:124px;height:43.8px;background:#b4b4b4"></div>
<div class="tl" style="left:238px;top:392.1px;color:#fff">Paštas</div>
<svg class="ic" style="left:197.7px;top:425.4px" width="31" height="34" viewBox="0 0 31 34"><rect x=".5" y=".5" width="30" height="33" rx="2.200" fill="#33507f"/><rect x="1" y="2.500" width="5.500" height="30" rx="1" fill="url(#spine)"/><rect x="6" y="2.600" width="23.800" height="29.200" rx="1" fill="url(#book)"/><rect x="2" y="1.200" width="27.500" height="1.500" rx=".7" fill="#eef4fb"/><rect x="1" y="31.300" width="5.500" height="1.700" fill="#1f2f4e"/></svg>
<div class="tl" style="left:238px;top:435.9px">Pinigai</div>
<svg class="ic" style="left:197.7px;top:469.2px" width="31" height="34" viewBox="0 0 31 34"><rect x=".5" y=".5" width="30" height="33" rx="2.200" fill="#33507f"/><rect x="1" y="2.500" width="5.500" height="30" rx="1" fill="url(#spine)"/><rect x="6" y="2.600" width="23.800" height="29.200" rx="1" fill="url(#book)"/><rect x="2" y="1.200" width="27.500" height="1.500" rx=".7" fill="#eef4fb"/><rect x="1" y="31.300" width="5.500" height="1.700" fill="#1f2f4e"/></svg>
<div class="tl" style="left:238px;top:472.2px;line-height:15.500px">Telefono<br>skambučiai.</div>
<svg class="ic" style="left:118px;top:520.8px" width="18" height="18" viewBox="0 0 18 18"><circle cx="9" cy="9" r="7.300" fill="none" stroke="#adb7b4" stroke-width="1.300"/><path d="M4.500 9h8.500M10 5.500l3.500 3.500-3.500 3.500" stroke="#a6b0ad" stroke-width="1.300" fill="none"/></svg>
<svg class="ic" style="left:151px;top:516.0px" width="34.500" height="28" viewBox="0 0 36 30" preserveAspectRatio="none"><path d="M1 26V3.500q0-2 2-2h9q1.500 0 2.500 1.500l1.500 2.500h16q2 0 2 2V26Z" fill="url(#fold)" stroke="#dd9a42" stroke-width="1"/><rect x="1" y="10.500" width="33.500" height="18" rx="2" fill="url(#fold3)" stroke="#dc8422" stroke-width="1"/><path d="M2.500 12h30.500" stroke="#ffe0a0" stroke-width="1.200"/></svg>
<div class="tl" style="left:194px;top:523.5px">Parduotuvė</div>
<svg class="ic" style="left:74px;top:564.6px" width="18" height="18" viewBox="0 0 18 18"><circle cx="9" cy="9" r="7.300" fill="none" stroke="#adb7b4" stroke-width="1.300"/><path d="M4.500 9h8.500M10 5.500l3.500 3.500-3.500 3.500" stroke="#a6b0ad" stroke-width="1.300" fill="none"/></svg>
<svg class="ic" style="left:107px;top:559.8px" width="34.500" height="28" viewBox="0 0 36 30" preserveAspectRatio="none"><path d="M1 26V3.500q0-2 2-2h9q1.500 0 2.500 1.500l1.500 2.500h16q2 0 2 2V26Z" fill="url(#fold)" stroke="#dd9a42" stroke-width="1"/><rect x="1" y="10.500" width="33.500" height="18" rx="2" fill="url(#fold3)" stroke="#dc8422" stroke-width="1"/><path d="M2.500 12h30.500" stroke="#ffe0a0" stroke-width="1.200"/></svg>
<div class="tl" style="left:150px;top:567.3px">Katalogai</div>
<svg class="ic" style="left:74px;top:608.4px" width="18" height="18" viewBox="0 0 18 18"><circle cx="9" cy="9" r="7.300" fill="none" stroke="#adb7b4" stroke-width="1.300"/><path d="M4.500 9h8.500M10 5.500l3.500 3.500-3.500 3.500" stroke="#a6b0ad" stroke-width="1.300" fill="none"/></svg>
<svg class="ic" style="left:107px;top:603.6px" width="34.500" height="28" viewBox="0 0 36 30" preserveAspectRatio="none"><path d="M1 26V3.500q0-2 2-2h9q1.500 0 2.500 1.500l1.500 2.500h16q2 0 2 2V26Z" fill="url(#fold)" stroke="#dd9a42" stroke-width="1"/><rect x="1" y="10.500" width="33.500" height="18" rx="2" fill="url(#fold3)" stroke="#dc8422" stroke-width="1"/><path d="M2.500 12h30.500" stroke="#ffe0a0" stroke-width="1.200"/></svg>
<div class="tl" style="left:150px;top:611.1px">Ataskaitos</div>
<svg class="ic" style="left:331px;top:878px" width="18" height="18" viewBox="0 0 18 18"><circle cx="7" cy="7" r="4.800" fill="#fff" stroke="#2a62c9" stroke-width="2.200"/><path d="M10.500 10.500l5 5" stroke="#2a62c9" stroke-width="3" stroke-linecap="round"/></svg>
<!--LP1-->
<!--M0-->
<!-- TOOLBAR 2 -->
<div class="grip" style="left:382px;top:176px;height:21px"></div>
<svg class="ic" style="left:394.500px;top:168px" width="36" height="36" viewBox="0 0 38 38"><circle cx="18.500" cy="18.500" r="17.500" fill="url(#gg)" stroke="#86b453" stroke-width="1.200"/><path d="M10 15h8.500V10l10.500 8.500L18.500 27V22H10Z" fill="#fff" stroke="#7aa848" stroke-width="1.200" stroke-linejoin="round"/></svg>
<div class="t" style="left:437px;top:177px;font-size:14.7px;line-height:18px;height:18px;color:#1a1a1a;letter-spacing:-.1px">Veiksmai</div>
<svg class="ic" style="left:497px;top:183px" width="8" height="5" viewBox="0 0 8 5"><path d="M.5.5h7L4 4.500Z" fill="#333"/></svg>
<div class="sep" style="left:517px;top:165px;height:43px"></div>
<svg class="ic" style="left:525px;top:167px" width="38" height="38" viewBox="0 0 38 38"><defs><radialGradient id="clk" cx=".5" cy=".5" r=".5"><stop offset="0" stop-color="#fff"/><stop offset=".8" stop-color="#f4f7fb"/><stop offset="1" stop-color="#d5dde8"/></radialGradient></defs><circle cx="19" cy="19" r="16.300" fill="url(#clk)" stroke="#e08484" stroke-width="3.600"/><circle cx="19" cy="19" r="18.100" fill="none" stroke="#cf6262" stroke-width=".9"/><circle cx="19" cy="19" r="14.300" fill="none" stroke="#c9ced8" stroke-width="1"/><path d="M14 4.500A15.500 15.500 0 0 1 30 8" fill="none" stroke="#f2b4b4" stroke-width="1.600"/><path d="M19 19l7.500-8.500" stroke="#5d6b80" stroke-width="1.300"/><path d="M19 19v11.500" stroke="#5d6b80" stroke-width="1.200"/><path d="M19 18.500H7.500" stroke="#dc5a5a" stroke-width="1.400"/><circle cx="19" cy="19" r="1.700" fill="#6f7f98"/><g fill="#9aa7ba"><circle cx="19" cy="7.500" r=".8"/><circle cx="30.500" cy="19" r=".8"/><circle cx="24.800" cy="29" r=".7"/><circle cx="13.200" cy="29" r=".7"/><circle cx="29" cy="24.800" r=".7"/><circle cx="9" cy="13.200" r=".7"/><circle cx="13.200" cy="9" r=".7"/><circle cx="9" cy="24.800" r=".7"/><circle cx="29" cy="13.200" r=".7"/></g></svg>
<svg class="ic" style="left:580px;top:177px" width="18" height="18" viewBox="108 2 18 18"><use href="#exg"/></svg>
<div class="t" style="left:943px;top:172px;width:200px;text-align:center;font-size:24px;line-height:30px;height:30px;color:#303030">Paštas</div>
<svg class="ic" style="left:1490px;top:178px" width="18" height="18" viewBox="108 2 18 18"><use href="#exg"/></svg>
<div class="a" style="left:1518px;top:163px;width:26px;height:89px;border:1px solid #c4c4c4;background:#f6f6f6"></div>
<svg class="ic" style="left:1521px;top:167px" width="20" height="20" viewBox="0 0 20 20"><rect x="1" y="1" width="12" height="14" fill="#eaf1fb" stroke="#8fa6d6" stroke-width="1"/><path d="M3 4h3M3 7h3M3 10h3M8 4h3" stroke="#7f9ad0" stroke-width="1.200"/><rect x="7.500" y="5.500" width="11.500" height="13" rx="1" fill="#3f78d8" stroke="#2b5cb8" stroke-width="1"/><text x="13.300" y="16" font-family="Liberation Sans, sans-serif" font-size="10.500" font-weight="700" fill="#fff" text-anchor="middle">?</text></svg>
<div class="t" style="left:1497px;top:224px;width:68px;text-align:left;transform:rotate(90deg);transform-origin:center;font-size:13.5px;color:#333">vadovas</div>
<!-- CONTENT -->
<div class="a" style="left:375px;top:217px;width:1140px;height:679px;border:1px solid #c9c9c9;background:#fff"></div>
<div class="a" style="left:392px;top:234px;width:433px;height:31px;border:1px solid #c4c4c4;background:#fff"></div>
<div class="c" style="left:394px;top:241px;color:#222;letter-spacing:-.2px">Pilna stalo paieška</div>
<svg class="ic" style="left:803px;top:247px" width="9" height="5" viewBox="0 0 9 5"><path d="M.5.5h8L4.500 4.500Z" fill="#444"/></svg>
<div class="a" style="left:376px;top:280px;width:1138px;height:1px;background:#d4d4d4"></div>
<div class="c" style="left:386px;top:296px;color:#b4b4b4">Vilkite čia stulpelio antraštę, kad sugrupuotumėte pagal ją</div>
<div class="a" style="left:376px;top:324px;width:1138px;height:2px;background:#c4c4c4"></div>
<div class="a" style="left:376px;top:325px;width:15px;height:243px;background:#f4f4f4;border-right:1px solid #c9c9c9"></div>
<div class="a" style="left:376px;top:325px;width:2px;height:243px;background:#c2c2c2"></div>
<div class="hd" style="left:391px;width:147px;padding-left:1px">Darbuotojas</div>
<div class="hd" style="left:538px;width:87px">Data</div>
<div class="hd" style="left:625px;width:88px">Pašto tipas</div>
<div class="hd" style="left:713px;width:125px">kontaktas</div>
<div class="hd" style="left:838px;width:125px">Gavėjas</div>
<div class="hd" style="left:963px;width:125px">Tema</div>
<div class="hd" style="left:1088px;width:87px">Kaina</div>
<div class="hd" style="left:1175px;width:125px">Statusas</div>
<div class="hd" style="left:1300px;width:163px">Pastaba</div>
<div class="a" style="left:391px;top:369px;width:1072px;height:43px;background:#d9f1ff;border-bottom:1px solid #c9c9c9"></div>
<div class="a" style="left:391px;top:412px;width:1072px;height:23px;background:#fff;border-bottom:1px solid #c9c9c9"></div>
<div class="a" style="left:376px;top:434px;width:15px;height:1px;background:#c9c9c9"></div>
<div class="c" style="left:426px;top:383px;letter-spacing:.33px">Darbuotojas #1</div>
<div class="c" style="left:541px;top:383px;letter-spacing:.25px">18.02.2022</div>
<svg class="ic" style="left:631px;top:379px" width="11" height="18" viewBox="0 0 11 18"><rect x=".5" y=".5" width="10" height="17" rx="1.500" fill="#6b6f75" stroke="#4a4d52" stroke-width="1"/><rect x="2" y="2" width="7" height="7.500" fill="#6fc3f2"/><rect x="3" y="11.500" width="5" height="3.500" fill="#d9dbde"/></svg>
<div class="c" style="left:649px;top:383px;letter-spacing:-.9px">SMS</div>
<div class="c" style="left:717px;top:383px;letter-spacing:.02px">+99990000000</div>
<div class="c" style="left:840px;top:383px;letter-spacing:.02px">Klientas Nr.5</div>
<div class="c" style="left:965px;top:383px">Nuolaidos</div>
<div class="c" style="left:1100px;width:73px;text-align:right;top:383px">1,50</div>
<div class="c" style="left:1178px;top:383px">Išsiųsta</div>
<div class="pv" style="top:416px">Kažkoks tekstas</div>
<div class="a" style="left:391px;top:435px;width:1072px;height:44px;background:#ffffa3;border-bottom:1px solid #c9c9c9"></div>
<div class="a" style="left:391px;top:479px;width:1072px;height:22px;background:#fff;border-bottom:1px solid #c9c9c9"></div>
<div class="a" style="left:376px;top:500px;width:15px;height:1px;background:#c9c9c9"></div>
<div class="c" style="left:426px;top:449px;letter-spacing:.33px">Darbuotojas #1</div>
<div class="c" style="left:541px;top:449px;letter-spacing:.25px">18.02.2022</div>
<svg class="ic" style="left:631px;top:445px" width="11" height="18" viewBox="0 0 11 18"><rect x=".5" y=".5" width="10" height="17" rx="1.500" fill="#6b6f75" stroke="#4a4d52" stroke-width="1"/><rect x="2" y="2" width="7" height="7.500" fill="#6fc3f2"/><rect x="3" y="11.500" width="5" height="3.500" fill="#d9dbde"/></svg>
<div class="c" style="left:649px;top:449px;letter-spacing:-.9px">SMS</div>
<div class="c" style="left:717px;top:449px;letter-spacing:.02px">+77772222222</div>
<div class="c" style="left:840px;top:449px;letter-spacing:.02px">Klientas Nr.5</div>
<div class="c" style="left:965px;top:449px">Nuolaidos</div>
<div class="c" style="left:1100px;width:73px;text-align:right;top:449px">0,00</div>
<div class="c" style="left:1178px;top:449px">Išsiūsti</div>
<div class="pv" style="top:483px">Kažkoks tekstas</div>
<div class="a" style="left:391px;top:501px;width:1072px;height:44px;background:#ecb4b4;border-bottom:1px solid #c9c9c9"></div>
<div class="a" style="left:391px;top:545px;width:1072px;height:23px;background:#fff;border-bottom:1px solid #c9c9c9"></div>
<div class="a" style="left:376px;top:567px;width:15px;height:1px;background:#c9c9c9"></div>
<div class="c" style="left:426px;top:515px;letter-spacing:.33px">Darbuotojas #1</div>
<div class="c" style="left:541px;top:515px;letter-spacing:.25px">18.02.2022</div>
<svg class="ic" style="left:631px;top:511px" width="11" height="18" viewBox="0 0 11 18"><rect x=".5" y=".5" width="10" height="17" rx="1.500" fill="#6b6f75" stroke="#4a4d52" stroke-width="1"/><rect x="2" y="2" width="7" height="7.500" fill="#6fc3f2"/><rect x="3" y="11.500" width="5" height="3.500" fill="#d9dbde"/></svg>
<div class="c" style="left:649px;top:515px;letter-spacing:-.9px">SMS</div>
<div class="c" style="left:717px;top:515px;letter-spacing:.02px">+79990000000</div>
<div class="c" style="left:840px;top:515px;letter-spacing:.02px">Klientas Nr.7</div>
<div class="c" style="left:965px;top:515px">Nuolaidos</div>
<div class="c" style="left:1100px;width:73px;text-align:right;top:515px">0,00</div>
<div class="c" style="left:1178px;top:515px">Klaida</div>
<div class="c" style="left:1303px;top:515px">Abonento nėra</div>
<div class="pv" style="top:549px">Kažkoks tekstas</div>
<div class="a" style="left:1463px;top:325px;width:1px;height:243px;background:#c9c9c9"></div>
<div class="a" style="left:391px;top:369px;width:1072px;height:65px;border:1px dotted #333"></div>
<svg class="ic" style="left:380px;top:397px" width="6" height="9" viewBox="0 0 6 9"><path d="M.5.5L5 4.500.5 8.500Z" fill="#444"/></svg>
<div class="a" style="left:376px;top:849px;width:1088px;height:46px;background:#f4f4f4;border:1px solid #c9c9c9"></div>
<div class="a" style="left:1091px;top:853px;width:82px;height:38px;background:#fff;border:1px solid #c9c9c9"></div>
<div class="c" style="left:1100px;width:66px;text-align:right;top:865px">1,50</div>
<div class="a" style="left:934px;top:900px;width:21px;height:0;border-top:1px dotted #999"></div>
<div class="a" style="left:369px;top:521px;width:0;height:21px;border-left:1px dotted #999"></div>
<!--M1-->
<!--B0-->
<!-- BOTTOM TABS -->
<div class="a" style="left:22px;top:907px;width:1528px;height:4px;border:1px solid #c9c9c9;background:#fff"></div>
<div class="a" style="left:23px;top:908px;width:217px;height:52px;background:#f3f3f3;border-left:1px solid #c9c9c9;border-bottom:1px solid #c9c9c9;border-top:1px solid #d6d6d6"></div>
<div class="a" style="left:239px;top:908px;width:151px;height:52px;background:#fff;border-left:1px solid #d0d0d0;border-right:1px solid #d0d0d0"></div>
<div class="a" style="left:239px;top:960px;width:151px;height:3px;background:#1ba1e2"></div>
<svg class="ic" style="left:39px;top:921px" width="32" height="27" viewBox="0 0 32 27"><rect x=".600" y=".600" width="30.500" height="25.500" rx="2" fill="#eef1fb" stroke="#8f9bd0" stroke-width="1.200"/><path d="M1.200 2.600q0-1.400 1.400-1.400h26.500q1.400 0 1.400 1.400V6.500H1.200Z" fill="#8fc0ea"/><circle cx="27" cy="3.800" r="1.200" fill="#e05050"/></svg>
<div class="c" style="left:82px;top:926px;color:#444;letter-spacing:-.27px">Greitas paleidimas</div>
<div class="a" style="left:203px;top:924px;width:19px;height:19px;background:#fff"></div>
<svg class="ic" style="left:207px;top:928px" width="12" height="12" viewBox="0 0 12 12"><path d="M1.500 1.500l8.500 8.500M10 1.500l-8.500 8.500" stroke="#1ba1e2" stroke-width="2"/></svg>
<svg class="ic" style="left:256px;top:917.500px" width="31" height="34" viewBox="0 0 31 34" preserveAspectRatio="none"><rect x=".5" y=".5" width="30" height="33" rx="2.200" fill="#33507f"/><rect x="1" y="2.500" width="5.500" height="30" rx="1" fill="url(#spine)"/><rect x="6" y="2.600" width="23.800" height="29.200" rx="1" fill="url(#book)"/><rect x="2" y="1.200" width="27.500" height="1.500" rx=".7" fill="#eef4fb"/><rect x="1" y="31.300" width="5.500" height="1.700" fill="#1f2f4e"/></svg>
<div class="c" style="left:298px;top:927px;color:#1ba1e2;letter-spacing:-.1px">Paštas</div>
<svg class="ic" style="left:357px;top:929px" width="12" height="12" viewBox="0 0 12 12"><path d="M1.500 1.500l8.500 8.500M10 1.500l-8.500 8.500" stroke="#1ba1e2" stroke-width="2"/></svg>
<!-- STATUS BAR -->
<svg class="ic" style="left:28px;top:965px" width="21" height="21" viewBox="0 0 21 21"><circle cx="10.500" cy="10.500" r="10" fill="#3f7fc4"/><circle cx="10.500" cy="5.800" r="1.700" fill="#fff"/><rect x="9" y="8.800" width="3" height="7.500" rx=".6" fill="#fff"/></svg>
<div class="st" style="left:70px;letter-spacing:.06px">7.3.9041.10 Professional</div>
<div class="ssep" style="left:246px"></div>
<svg class="ic" style="left:261px;top:965px" width="16" height="20" viewBox="0 0 16 20"><g stroke="#c9822a" stroke-width="1" fill="url(#gold)"><rect x=".5" y="13" width="15" height="6.500" rx="2.500"/><rect x=".5" y="7" width="15" height="6.500" rx="2.500"/><rect x=".5" y="1" width="15" height="6.500" rx="2.500"/></g><ellipse cx="8" cy="3" rx="6.500" ry="1.800" fill="#ffe9b8"/></svg>
<div class="st" style="left:299px">localhost (utf8)</div>
<div class="ssep" style="left:416px"></div>
<svg class="ic" style="left:428px;top:965px" width="20" height="20" viewBox="0 0 21 21"><path d="M1 20q0-7 9.500-7T20 20Z" fill="#6fb040" stroke="#4f8a2c" stroke-width=".8"/><ellipse cx="10.500" cy="8" rx="5.200" ry="6" fill="url(#skin)" stroke="#c99a66" stroke-width=".8"/><path d="M5 7.500Q4.500 1 10.500 1.500T16 7.500Q14.500 4.500 10.500 4.500T5 7.500Z" fill="#b0662f"/></svg>
<div class="st" style="left:468px">NIKOLAY (MAIN)</div>
<div class="ssep" style="left:594px"></div>
<svg class="ic" style="left:609px;top:966px" width="18" height="18" viewBox="0 0 18 18"><rect x=".5" y=".5" width="17" height="17" fill="#fff" stroke="#7a86c4" stroke-width="1"/><rect x="1" y="1" width="16" height="4" fill="#d9534a"/><text x="9" y="15" font-family="Liberation Serif, serif" font-size="11" font-weight="700" fill="#333" text-anchor="middle">31</text></svg>
<div class="st" style="left:649px;letter-spacing:.2px">13.06.2024</div>
<div class="ssep" style="left:744px"></div>
<div class="st" style="left:779px;letter-spacing:.2px">00:00:00:309</div>
<div class="ssep" style="left:892px"></div>
<div class="ssep" style="left:1518px"></div>
<svg class="ic" style="left:1533px;top:971px" width="16" height="16" viewBox="0 0 16 16"><g fill="#7a7a7a"><rect x="11.400" y="1.400" width="2" height="2"/><rect x="6.400" y="6.400" width="2" height="2"/><rect x="11.400" y="6.400" width="2" height="2"/><rect x="1.400" y="11.400" width="2" height="2"/><rect x="6.400" y="11.400" width="2" height="2"/><rect x="11.400" y="11.400" width="2" height="2"/></g></svg>
<!--B1-->
</body>
</html>
